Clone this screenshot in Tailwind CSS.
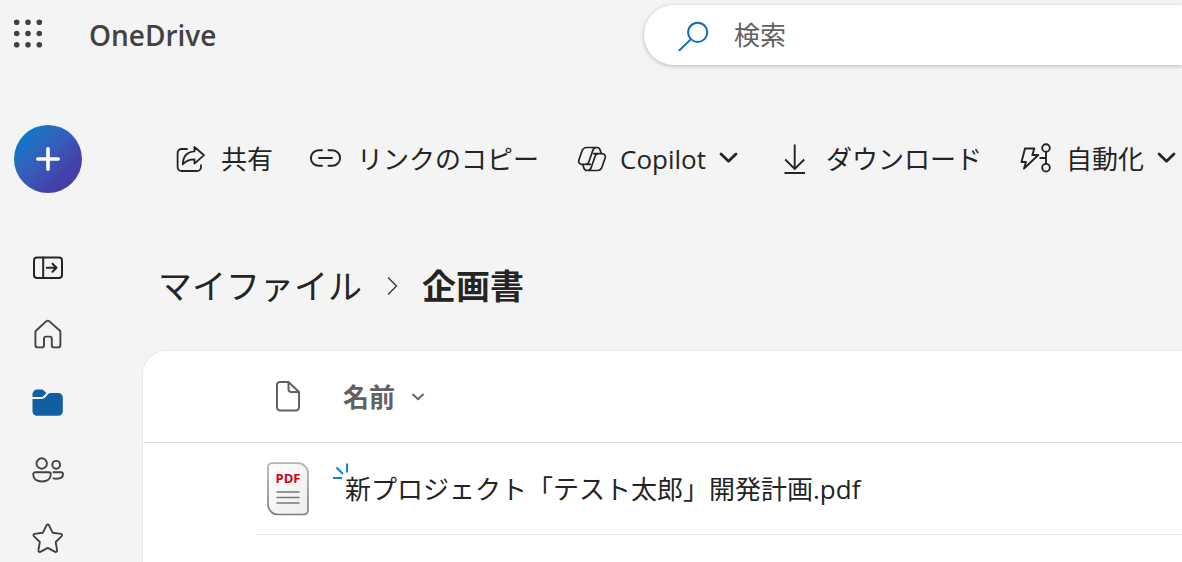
<!DOCTYPE html>

<html lang="ja">
<head>
    <meta charset="utf-8">
    <script src="https://cdn.jsdelivr.net/npm/@tailwindcss/browser@4"></script>
    <title>OneDrive</title>
</head>

<body class="h-screen overflow-hidden flex flex-col bg-[#f4f4f4] text-[#242424] text-[26px] leading-9 font-['Open_Sans','Noto_Sans_CJK_JP',sans-serif]">

<header class="grid grid-cols-[644px_1fr] pt-[5px]">
    <div class="flex items-center">
        <button type="button" aria-label="アプリ起動ツール" class="w-14 flex justify-center">
            <svg class="size-8" viewBox="0 0 32 32" fill="#424242">
                <circle cx="4.7" cy="3.2" r="2.8"/><circle cx="16" cy="3.2" r="2.8"/><circle cx="27.3" cy="3.2" r="2.8"/>
                <circle cx="4.7" cy="14.5" r="2.8"/><circle cx="16" cy="14.5" r="2.8"/><circle cx="27.3" cy="14.5" r="2.8"/>
                <circle cx="4.7" cy="25.8" r="2.8"/><circle cx="16" cy="25.8" r="2.8"/><circle cx="27.3" cy="25.8" r="2.8"/>
            </svg>
        </button>
        <a href="#" class="ml-[33px] text-[28px] font-semibold text-[#424242]">OneDrive</a>
    </div>
    <label class="h-[60px] flex items-center gap-6 pl-[34px] rounded-l-full bg-white shadow-[0_1px_4px_rgba(0,0,0,0.25)]">
        <svg class="size-8 shrink-0" viewBox="0 0 32 32" fill="none" stroke="#0f6cbd" stroke-width="2">
            <circle cx="19.7" cy="13.3" r="9.6"/>
            <path d="M13 20.1L.7 32"/>
        </svg>
        <input type="search" aria-label="検索" placeholder="検索" class="flex-1 min-w-0 outline-none placeholder:text-[#616161]">
    </label>
</header>

<div class="flex-1 min-h-0 flex">
    <nav class="w-24 shrink-0 overflow-hidden flex flex-col items-center pt-[60px]">
        <button type="button" aria-label="新規作成" class="size-[68px] mb-10 shrink-0 rounded-full bg-linear-to-br from-[#0078c8] from-15% to-[#4340aa] to-75% flex items-center justify-center">
            <svg class="size-6" viewBox="0 0 24 24" fill="none" stroke="#fff" stroke-width="3.6" stroke-linecap="round">
                <path d="M12 1.8V22.2M1.8 12H22.2"/>
            </svg>
        </button>
        <a href="#" aria-label="ナビゲーションを開く" class="h-[68px] shrink-0 flex items-center">
            <svg class="size-8" viewBox="0 0 32 32" fill="none" stroke="#242424" stroke-width="2" stroke-linecap="round" stroke-linejoin="round">
                <rect x="2" y="6.5" width="28" height="20.5" rx="3"/>
                <path d="M11.2 6.5V27M14.8 16.7H24.5M20.5 12.7L24.5 16.7L20.5 20.7"/>
            </svg>
        </a>
        <a href="#" aria-label="ホーム" class="h-[68px] shrink-0 flex items-center">
            <svg class="size-8" viewBox="0 0 32 32" fill="none" stroke="#424242" stroke-width="1.9" stroke-linejoin="round">
                <path d="M14.2 2.4a2.4 2.4 0 0 1 3.2 0L27.4 11.2a3 3 0 0 1 1 2.2V26a2.4 2.4 0 0 1-2.4 2.4H22a2.2 2.2 0 0 1-2.2-2.2V19.6a2 2 0 0 0-2-2H14a2 2 0 0 0-2 2V26.2A2.2 2.2 0 0 1 9.8 28.4H5.8A2.4 2.4 0 0 1 3.4 26V13.4a3 3 0 0 1 1-2.2Z"/>
            </svg>
        </a>
        <a href="#" aria-label="マイファイル" class="h-[68px] shrink-0 flex items-center">
            <svg class="size-8" viewBox="0 0 32 32" fill="#115ea3">
                <path d="M.5 10V7A4.5 4.5 0 0 1 5 2.6H9.2a4 4 0 0 1 2.8 1.1L14.4 6 11.6 9A3 3 0 0 1 9.4 10Z"/>
                <path d="M.5 12H9.8a4.5 4.5 0 0 0 3.3-1.4L16.2 7.1A3.4 3.4 0 0 1 18.6 6H26.3A4.5 4.5 0 0 1 30.8 10.5V24.2A4.5 4.5 0 0 1 26.3 28.7H5A4.5 4.5 0 0 1 .5 24.2Z"/>
            </svg>
        </a>
        <a href="#" aria-label="共有" class="h-[68px] shrink-0 flex items-center">
            <svg class="size-8" viewBox="0 0 32 32" fill="none" stroke="#424242" stroke-width="1.9" stroke-linecap="round" stroke-linejoin="round">
                <circle cx="9.7" cy="8.5" r="5.2"/><circle cx="24.2" cy="9.8" r="3.9"/>
                <path d="M3.2 17.3H16.8A2 2 0 0 1 18.8 19.3C18.8 24 15 26.5 10 26.5S1.2 24 1.2 19.3A2 2 0 0 1 3.2 17.3ZM21.5 17.3H29A2 2 0 0 1 31 19.3C31 22.5 28 23.7 24.5 23.7 23.4 23.7 22.4 23.6 21.5 23.3"/>
            </svg>
        </a>
        <a href="#" aria-label="お気に入り" class="h-[68px] shrink-0 flex items-center">
            <svg class="size-8" viewBox="0 0 32 32" fill="none" stroke="#424242" stroke-width="1.9" stroke-linejoin="round">
                <path d="M14.6 2.2a1.3 1.3 0 0 1 2.3 0L20.6 9.7 29 10.9a1.3 1.3 0 0 1 .7 2.2L23.7 19 25.1 27.4a1.3 1.3 0 0 1-1.9 1.4L15.8 24.9 8.3 28.8A1.3 1.3 0 0 1 6.4 27.4L7.8 19 1.8 13.1a1.3 1.3 0 0 1 .7-2.2L10.9 9.7Z"/>
            </svg>
        </a>
    </nav>

    <main class="flex-1 min-w-0 flex flex-col pl-[46px]">
        <div role="toolbar" class="flex items-center gap-[37px] pl-8 pt-[76px] whitespace-nowrap">
            <button type="button" class="flex items-center gap-[15px]">
                <svg class="size-8" viewBox="0 0 32 32" fill="none" stroke="#242424" stroke-width="1.8" stroke-linecap="round" stroke-linejoin="round">
                    <path d="M13 6H7.6A4 4 0 0 0 3.6 10V24A4 4 0 0 0 7.6 28H23A4 4 0 0 0 27 24V22.2"/>
                    <path d="M20.5 4L30 12.2 20.5 20.6V16.4C15 16.4 11.5 18.2 8.7 21.4 9 14.5 12.5 8.8 20.5 8.3Z"/>
                </svg>
                共有
            </button>
            <button type="button" class="flex items-center gap-[15px]">
                <svg class="size-8" viewBox="0 0 32 32" fill="none" stroke="#242424" stroke-width="1.9" stroke-linecap="round">
                    <path d="M12 7.2H8.7a7.8 7.8 0 0 0 0 15.6H12M18.5 7.2H22.3a7.8 7.8 0 0 1 0 15.6H18.5M9 15H22"/>
                </svg>
                リンクのコピー
            </button>
            <button type="button" class="flex items-center gap-3">
                <svg class="size-8" viewBox="0 0 32 32" fill="none" stroke="#242424" stroke-width="1.7" stroke-linejoin="round">
                    <path d="M21 4.5H10.5C8 4.5 6.6 6 5.8 8.5L2.9 17C2 19.5 3.5 21.3 6 21.3H9.5C11 21.3 12.3 20.5 12.8 19L16.8 7.5C17.3 5.5 19 4.5 21 4.5 23 4.5 24 6 24.5 8L25.2 10.7M9.5 21.3H15"/>
                    <path d="M11 27.5H21.5C24 27.5 25.4 26 26.2 23.5L29.1 15C30 12.5 28.5 10.7 26 10.7H22.5C21 10.7 19.7 11.5 19.2 13L15.2 24.5C14.7 26.5 13 27.5 11 27.5 9 27.5 8 26 7.5 24L6.8 21.3M22.5 10.7H17"/>
                </svg>
                Copilot
                <svg class="size-6" viewBox="0 0 24 24" fill="none" stroke="#242424" stroke-width="2.8" stroke-linecap="round" stroke-linejoin="round"><path d="M3 7L10.5 14.3 18 7"/></svg>
            </button>
            <button type="button" class="flex items-center gap-[15px]">
                <svg class="size-8" viewBox="0 0 32 32" fill="none" stroke="#242424" stroke-width="1.9">
                    <path d="M15.7 1.5V26M6.2 16.5L15.7 26 25.2 16.5M5.5 30H26"/>
                </svg>
                ダウンロード
            </button>
            <button type="button" class="flex items-center gap-[15px]">
                <svg class="size-8" viewBox="0 0 32 32" fill="none" stroke="#242424" stroke-width="1.9" stroke-linejoin="round">
                    <path d="M6 5.5H15.3L13.3 12H19.3L5 25.5 7 19H2.5Z"/>
                    <circle cx="27" cy="5" r="3.8"/><circle cx="27" cy="24.7" r="3.8"/>
                    <path d="M27 8.8V20.9M20.5 15H27"/>
                </svg>
                自動化
                <svg class="size-6 -ml-1" viewBox="0 0 24 24" fill="none" stroke="#242424" stroke-width="2.8" stroke-linecap="round" stroke-linejoin="round"><path d="M4 7L11.5 14.3 19 7"/></svg>
            </button>
        </div>

        <nav class="flex items-center gap-[18px] pl-4 pt-[84px] pb-[39px] text-[34px] leading-[50px] whitespace-nowrap">
            <a href="#">マイファイル</a>
            <svg class="size-6" viewBox="0 0 24 24" fill="none" stroke="#424242" stroke-width="1.5"><path d="M8 3.5L16.5 12 8 20.5"/></svg>
            <h1 class="font-bold">企画書</h1>
        </nav>

        <section class="flex-1 rounded-tl-3xl border-t border-l border-[#e8e8e8] bg-white">
            <table class="w-full table-fixed border-separate border-spacing-0 whitespace-nowrap">
                <colgroup>
                    <col class="w-[113px]">
                    <col class="w-16">
                    <col>
                </colgroup>
                <thead>
                <tr class="h-[92px] text-left text-[#616161]">
                    <td class="border-b border-[#e0e0e0]"></td>
                    <th scope="col" aria-label="種類" class="border-b border-[#e0e0e0]">
                        <svg class="size-8 mx-auto" viewBox="0 0 32 32" fill="none" stroke="#616161" stroke-width="2" stroke-linejoin="round">
                            <path d="M8 1H16.5L27 11V26.5A3 3 0 0 1 24 29.5H8A3 3 0 0 1 5 26.500V4A3 3 0 0 1 8 1ZM16.500 1V8A3 3 0 0 0 19.500 11H27"/>
                        </svg>
                    </th>
                    <th scope="col" class="border-b border-[#e0e0e0] pl-[23px]">
                        <button type="button" class="flex items-center gap-[15px] font-bold">
                            名前
                            <svg class="size-4" viewBox="0 0 16 16" fill="none" stroke="#616161" stroke-width="1.9"><path d="M2.5 5L8 10.3 13.5 5"/></svg>
                        </button>
                    </th>
                </tr>
                </thead>
                <tbody>
                <tr class="h-[92px]">
                    <td></td>
                    <td class="border-b border-[#ebebeb]">
                        <svg class="w-[42px] h-[54px] mx-auto" viewBox="0 0 42 54">
                            <defs>
                                <linearGradient id="page" x1="0" y1="0" x2="1" y2="1"><stop offset="0" stop-color="#fff"/><stop offset="1" stop-color="#ececec"/></linearGradient>
                                <linearGradient id="edge" x1="0" y1="0" x2="0" y2="1"><stop offset="0" stop-color="#b5b5b5"/><stop offset="1" stop-color="#7c7c7c"/></linearGradient>
                            </defs>
                            <path d="M5 1.2H31A10 10 0 0 1 41 11.2V48.5A4 4 0 0 1 37 52.5H11A10 10 0 0 1 1 42.5V5.2A4 4 0 0 1 5 1.2Z" fill="url(#page)" stroke="url(#edge)" stroke-width="1.7"/>
                            <text x="21" y="21" text-anchor="middle" fill="#d0021b" class="text-[13px] font-bold">PDF</text>
                            <path d="M9.5 30H32.5M9.5 35.5H32.5M9.5 41H32.5" stroke="#777" stroke-width="1.7"/>
                        </svg>
                    </td>
                    <td class="border-b border-[#ebebeb] pl-[25px]">
                        <a href="#" class="relative">
                            <svg class="absolute -left-3 -top-2 size-4" viewBox="0 0 16 16" fill="none" stroke="#0f82d8" stroke-width="2">
                                <path d="M14 .5V9.500M3.500 4.500L10 11M0 15H9"/>
                            </svg>
                            新プロジェクト「テスト太郎」開発計画.pdf
                        </a>
                    </td>
                </tr>
                </tbody>
            </table>
        </section>
    </main>
</div>

</body>
</html>
